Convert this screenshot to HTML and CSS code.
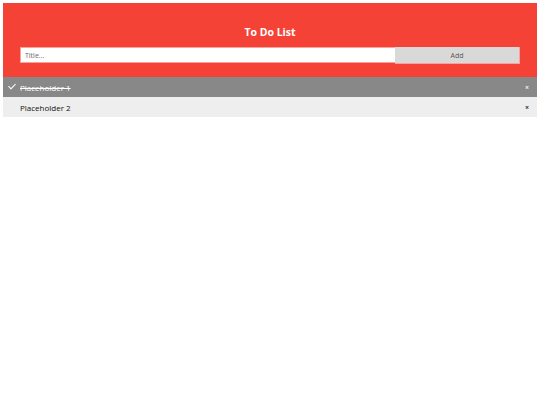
FILE: index.html
```html
<!DOCTYPE html>
<html>
<head>
<meta charset="utf-8">
<link rel="stylesheet" href="styles.css">
</head>
<body>
<div class="header">
  <h2 class="title">To Do List</h2>
  <div class="form">
    <input class="title-input" type="text" placeholder="Title...">
    <span class="add-btn">Add</span>
  </div>
</div>
<ul class="list">
  <li class="item checked"><span class="label">Placeholder 1</span><span class="close">×</span></li>
  <li class="item"><span class="label">Placeholder 2</span><span class="close">×</span></li>
</ul>
</body>
</html>
```

FILE: styles.css
```css
* { box-sizing: border-box; }
body {
  margin: 3px;
  font-family: "Open Sans", "Noto Sans", sans-serif;
  background: #fff;
}
.header {
  background: #f44336;
  padding: 22px 17px 13px;
  height: 74px;
}
.title {
  margin: 0 0 8px;
  color: #fff;
  font-size: 10.5px;
  line-height: 14px;
  font-weight: 700;
  text-align: center;
}
.form {
  display: flex;
  height: 17px;
}
.title-input {
  width: 75%;
  height: 16px;
  margin: 0;
  border: 1px solid #f7a39c;
  border-right: none;
  background: #fff;
  padding: 0 4px;
  font-family: "Open Sans", sans-serif;
  font-size: 7px;
  outline: none;
}
.title-input::placeholder { color: #666; }
.add-btn {
  width: 25%;
  height: 17px;
  background: #d9d9d9;
  color: #555;
  font-size: 7px;
  line-height: 17px;
  text-align: center;
  border-right: 1px solid #f7a39c;
  border-bottom: 1px solid #f7a39c;
}
.list {
  margin: 0;
  padding: 0;
  list-style: none;
}
.item {
  position: relative;
  display: flex;
  align-items: center;
  justify-content: space-between;
  height: 20px;
  padding: 0 8px 0 17px;
  background: #eee;
  color: #111;
  font-size: 8px;
}
.item.checked {
  background: #888;
  color: #fff;
}
.item.checked .label { text-decoration: line-through; }
.item.checked::before {
  content: "";
  position: absolute;
  left: 7px;
  top: 5px;
  width: 3px;
  height: 6px;
  border: solid #fff;
  border-width: 0 1px 1px 0;
  transform: rotate(45deg);
}
.close {
  font-size: 7px;
  color: #333;
  font-weight: 700;
}
.item.checked .close { color: #eee; }
```
